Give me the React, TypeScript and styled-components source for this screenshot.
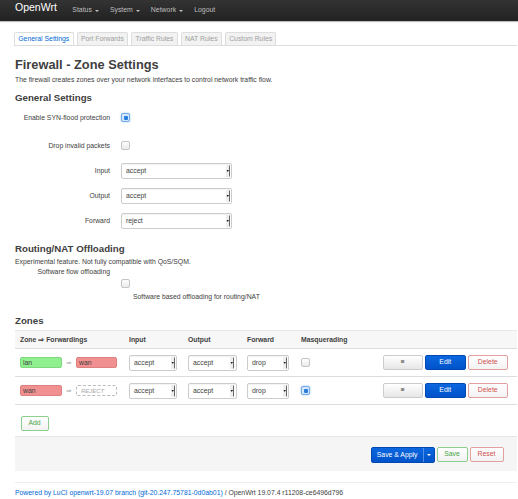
import styled, { createGlobalStyle, css } from "styled-components";

const GlobalStyle = createGlobalStyle`
  html, body { margin: 0; padding: 0; background: #fff; }
  body {
    font-family: "Liberation Sans", Arial, sans-serif;
    font-size: 6.85px;
    line-height: 10px;
    color: #404040;
  }
  * { box-sizing: border-box; }
`;

const TopBar = styled.header`
  height: 21px;
  display: flex;
  align-items: flex-start;
  padding: 0 15px;
  background: linear-gradient(#333, #222);
  box-shadow: 0 1px 1px rgba(0, 0, 0, 0.25);
`;

const Brand = styled.span`
  margin-top: 1.2px;
  margin-right: 15.5px;
  font-size: 10.5px;
  line-height: 12px;
  color: #fff;
`;

const Nav = styled.nav`
  display: flex;
  gap: 11px;
  margin-top: 5px;
`;

const NavItem = styled.span<{ $caret?: boolean }>`
  display: flex;
  align-items: center;
  gap: 3px;
  font-size: 6.9px;
  color: #bfbfbf;
  ${(p) =>
    p.$caret &&
    css`
      &::after {
        content: "";
        border-left: 2px solid transparent;
        border-right: 2px solid transparent;
        border-top: 2px solid #bfbfbf;
        margin-top: 1px;
      }
    `}
`;

const Main = styled.main`
  padding: 0 1px 0 15px;
`;

const TabList = styled.ul`
  display: flex;
  gap: 3px;
  list-style: none;
  margin: 11px 0 0 -1px;
  padding: 0;
  border-bottom: 1px solid #ddd;
`;

const Tab = styled.li<{ $active?: boolean }>`
  height: 13px;
  padding: 0 3.3px;
  line-height: 12px;
  border: 1px solid #ddd;
  border-bottom: none;
  border-radius: 2px 2px 0 0;
  background: ${(p) => (p.$active ? "#fff" : "#f2f2f2")};
  color: ${(p) => (p.$active ? "#0069d6" : "#a0a0a0")};
`;

const Title = styled.h2`
  margin: 11px 0 0;
  font-size: 12.8px;
  line-height: 15px;
  font-weight: bold;
  color: #404040;
`;

const Intro = styled.p`
  margin: 2.5px 0 0;
`;

const SectionTitle = styled.h3<{ $gap: number }>`
  margin: ${(p) => p.$gap}px 0 0;
  font-size: 9.7px;
  line-height: 12px;
  font-weight: bold;
`;

const FormRow = styled.div<{ $check?: boolean }>`
  display: grid;
  grid-template-columns: 95px 1fr;
  column-gap: 11px;
  align-items: center;
  padding: ${(p) => (p.$check ? "8.5px 0 9.5px" : "3px 0 6px")};
`;

const FlowRow = styled.div`
  display: grid;
  grid-template-columns: 95px 1fr;
  column-gap: 11px;
  align-items: start;
`;

const Label = styled.label`
  text-align: right;
`;

const Field = styled.div`
  display: flex;
  align-items: center;
`;

const FieldStack = styled.div`
  display: flex;
  flex-direction: column;
  align-items: flex-start;
  padding-top: 11.5px;
`;

const Help = styled.div`
  margin-top: 4.5px;
  padding-left: 12px;
`;

const Check = styled.span<{ $on?: boolean }>`
  position: relative;
  display: block;
  width: 9px;
  height: 9px;
  border: 1px solid #c4c4c4;
  border-radius: 2px;
  background: linear-gradient(#fdfdfd, #ebebeb);
  ${(p) =>
    p.$on &&
    css`
      border-color: #74abe6;
      background: #d4e6fb;
      box-shadow: 0 0 2px rgba(70, 140, 230, 0.6);
      &::after {
        content: "";
        position: absolute;
        inset: 1.5px;
        border-radius: 1px;
        background: #2b7ddb;
      }
    `}
`;

const SelectBox = styled.div<{ $w: number }>`
  display: flex;
  align-items: center;
  justify-content: space-between;
  width: ${(p) => p.$w}px;
  height: 16px;
  padding: 0 1.5px 0 4px;
  border: 1px solid #ccc;
  border-radius: 2px;
  background: #fff;
  color: #404040;
  box-shadow: inset 0 1px 1px rgba(0, 0, 0, 0.05);
`;

const Select = ({ value, width }: { value: string; width: number }) => (
  <SelectBox $w={width}>
    <span>{value}</span>
    <svg width="4" height="12" viewBox="0 0 4 12">
      <rect x="0" y="0" width="3" height="12" fill="#eee" />
      <path d="M3.5 0.5V11.5" stroke="#666" strokeWidth="1" />
      <path d="M0.5 5H3L1.75 7Z" fill="#222" />
    </svg>
  </SelectBox>
);

const Table = styled.div`
  margin-top: 3.5px;
`;

const TableRow = styled.div<{ $head?: boolean }>`
  display: grid;
  grid-template-columns: 109px 59px 59px 54px 1fr auto;
  align-items: center;
  height: ${(p) => (p.$head ? 19 : 28)}px;
  border-bottom: 1px solid #ddd;
  ${(p) =>
    p.$head &&
    css`
      border-top: 1px solid #e8e8e8;
      background: #f7f7f7;
      font-weight: bold;
    `}
`;

const Cell = styled.div`
  display: flex;
  align-items: center;
  padding: 0 5px;
`;

const ActionsCell = styled(Cell)`
  gap: 2px;
  padding-right: 9px;
`;

const ZoneBadge = styled.span<{ $zone: "lan" | "wan" | "reject" }>`
  display: inline-flex;
  align-items: center;
  width: 41.5px;
  height: 11px;
  padding: 0 2px;
  border-radius: 2px;
  border: 1px solid;
  ${(p) =>
    p.$zone === "lan" &&
    css`
      background: #90f090;
      border-color: #7fd87f;
    `}
  ${(p) =>
    p.$zone === "wan" &&
    css`
      background: #f09090;
      border-color: #dc8080;
    `}
  ${(p) =>
    p.$zone === "reject" &&
    css`
      border: 1px dashed #bbb;
      padding-left: 4px;
      font-style: italic;
      font-size: 6px;
      color: #aaa;
    `}
`;

const Arrow = styled.span`
  margin: 0 4.5px;
  font-family: "DejaVu Sans", sans-serif;
  font-size: 6.5px;
  color: #aaa;
`;

const Button = styled.button<{ $tone: "neutral" | "primary" | "positive" | "negative" }>`
  display: inline-flex;
  align-items: center;
  justify-content: center;
  min-width: 40.5px;
  height: 15.5px;
  padding: 0 5px;
  border: 1px solid;
  border-radius: 2px;
  font-family: inherit;
  font-size: 6.85px;
  line-height: 1;
  ${(p) =>
    p.$tone === "neutral" &&
    css`
      background: linear-gradient(#fff, #e6e6e6);
      border-color: #ccc;
      color: #333;
    `}
  ${(p) =>
    p.$tone === "primary" &&
    css`
      background: linear-gradient(#0b67df, #0053c9);
      border-color: #0049b3;
      color: #fff;
    `}
  ${(p) =>
    p.$tone === "positive" &&
    css`
      background: linear-gradient(#fff, #f2f2f2);
      border-color: #8ccf8c;
      color: #46a546;
    `}
  ${(p) =>
    p.$tone === "negative" &&
    css`
      background: linear-gradient(#fff, #f2f2f2);
      border-color: #e3a0a0;
      color: #d05050;
    `}
`;

const AddWrap = styled.div`
  margin: 10.5px 0 0 5.5px;
`;

const SmallButton = styled(Button)`
  min-width: 28px;
  height: 15px;
`;

const ActionBar = styled.div`
  display: flex;
  justify-content: flex-end;
  gap: 2px;
  height: 35px;
  margin-top: 5.5px;
  padding: 9.5px 13.5px 0 0;
  background: #f5f5f5;
  border-top: 1px solid #e5e5e5;
`;

const Split = styled.div`
  display: flex;
  height: 16px;
  border: 1px solid #0049b3;
  border-radius: 2px;
  background: linear-gradient(#0b67df, #0053c9);
  color: #fff;
`;

const SplitMain = styled.span`
  display: flex;
  align-items: center;
  padding: 0 5px;
  border-right: 1px solid #4f8fe6;
`;

const SplitCaret = styled.span`
  display: flex;
  align-items: center;
  justify-content: center;
  width: 10px;
  &::after {
    content: "";
    border-left: 2px solid transparent;
    border-right: 2px solid transparent;
    border-top: 2.5px solid #fff;
  }
`;

const Footer = styled.footer`
  margin-top: 10.5px;
  padding-top: 5.5px;
  border-top: 1px solid #eee;
`;

const FooterLink = styled.a`
  color: #0069d6;
  text-decoration: none;
`;

const zones = [
  { name: "lan" as const, dest: "wan" as const, masq: false },
  { name: "wan" as const, dest: "reject" as const, masq: true },
];

export default function App() {
  return (
    <>
      <GlobalStyle />
      <TopBar>
        <Brand>OpenWrt</Brand>
        <Nav>
          <NavItem $caret>Status</NavItem>
          <NavItem $caret>System</NavItem>
          <NavItem $caret>Network</NavItem>
          <NavItem>Logout</NavItem>
        </Nav>
      </TopBar>
      <Main>
        <TabList>
          <Tab $active>General Settings</Tab>
          <Tab>Port Forwards</Tab>
          <Tab>Traffic Rules</Tab>
          <Tab>NAT Rules</Tab>
          <Tab>Custom Rules</Tab>
        </TabList>
        <Title>Firewall - Zone Settings</Title>
        <Intro>
          The firewall creates zones over your network interfaces to control network traffic flow.
        </Intro>

        <SectionTitle $gap={7.5}>General Settings</SectionTitle>
        <FormRow $check>
          <Label>Enable SYN-flood protection</Label>
          <Field><Check $on /></Field>
        </FormRow>
        <FormRow $check>
          <Label>Drop invalid packets</Label>
          <Field><Check /></Field>
        </FormRow>
        <FormRow>
          <Label>Input</Label>
          <Field><Select value="accept" width={111} /></Field>
        </FormRow>
        <FormRow>
          <Label>Output</Label>
          <Field><Select value="accept" width={111} /></Field>
        </FormRow>
        <FormRow>
          <Label>Forward</Label>
          <Field><Select value="reject" width={111} /></Field>
        </FormRow>

        <SectionTitle $gap={7.5}>Routing/NAT Offloading</SectionTitle>
        <Intro>Experimental feature. Not fully compatible with QoS/SQM.</Intro>
        <FlowRow>
          <Label>Software flow offloading</Label>
          <FieldStack>
            <Check />
            <Help>Software based offloading for routing/NAT</Help>
          </FieldStack>
        </FlowRow>

        <SectionTitle $gap={12.5}>Zones</SectionTitle>
        <Table>
          <TableRow $head>
            <Cell>Zone ⇒ Forwardings</Cell>
            <Cell>Input</Cell>
            <Cell>Output</Cell>
            <Cell>Forward</Cell>
            <Cell>Masquerading</Cell>
            <Cell />
          </TableRow>
          {zones.map((z) => (
            <TableRow key={z.name}>
              <Cell>
                <ZoneBadge $zone={z.name}>{z.name}</ZoneBadge>
                <Arrow>⇒</Arrow>
                <ZoneBadge $zone={z.dest}>{z.dest === "reject" ? "REJECT" : z.dest}</ZoneBadge>
              </Cell>
              <Cell><Select value="accept" width={48} /></Cell>
              <Cell><Select value="accept" width={48.5} /></Cell>
              <Cell><Select value="drop" width={42} /></Cell>
              <Cell><Check $on={z.masq} /></Cell>
              <ActionsCell>
                <Button $tone="neutral">≡</Button>
                <Button $tone="primary">Edit</Button>
                <Button $tone="negative">Delete</Button>
              </ActionsCell>
            </TableRow>
          ))}
        </Table>
        <AddWrap>
          <SmallButton $tone="positive">Add</SmallButton>
        </AddWrap>

        <ActionBar>
          <Split>
            <SplitMain>Save &amp; Apply</SplitMain>
            <SplitCaret />
          </Split>
          <Button $tone="positive" style={{ minWidth: 31 }}>Save</Button>
          <Button $tone="negative" style={{ minWidth: 34 }}>Reset</Button>
        </ActionBar>

        <Footer>
          <FooterLink href="#">Powered by LuCI openwrt-19.07 branch (git-20.247.75781-0d0ab01)</FooterLink>
          {" / OpenWrt 19.07.4 r11208-ce6496d796"}
        </Footer>
      </Main>
    </>
  );
}
